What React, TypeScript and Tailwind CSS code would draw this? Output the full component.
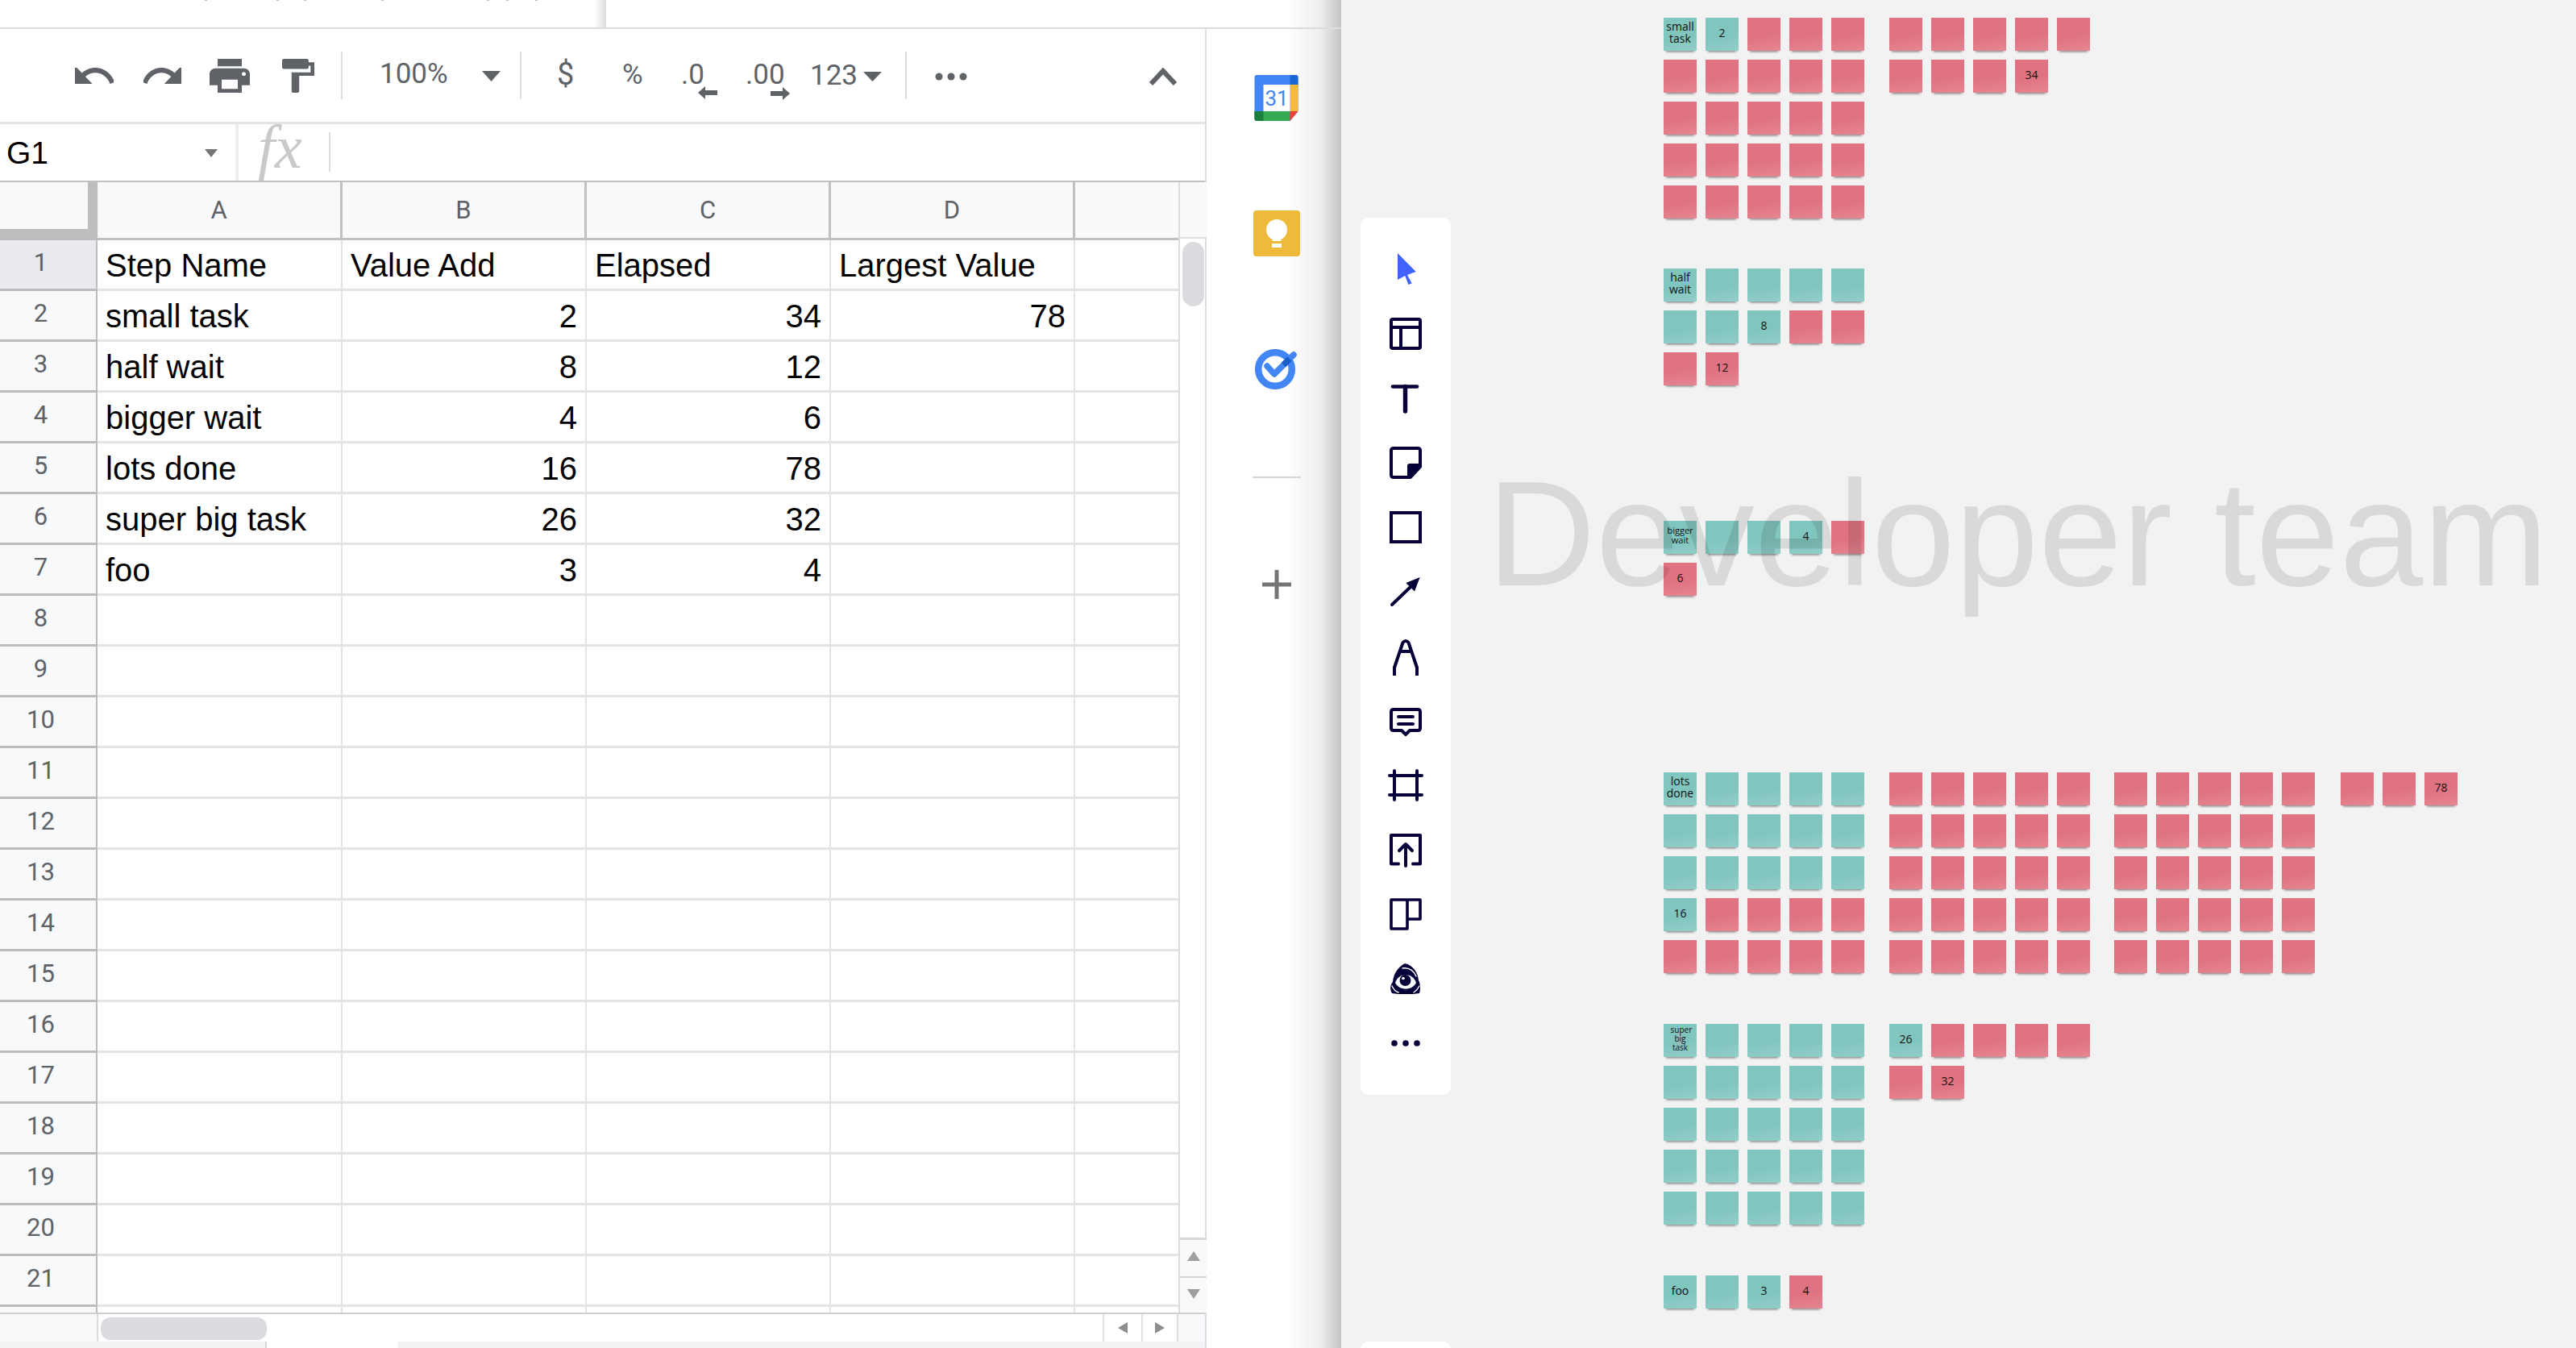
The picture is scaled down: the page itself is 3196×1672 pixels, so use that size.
import React from "react";

const gridCols = ["A", "B", "C", "D"];

// rows of the sheet: [step, value add, elapsed, largest]
const sheetRows: string[][] = [
  ["Step Name", "Value Add", "Elapsed", "Largest Value"],
  ["small task", "2", "34", "78"],
  ["half wait", "8", "12", ""],
  ["bigger wait", "4", "6", ""],
  ["lots done", "16", "78", ""],
  ["super big task", "26", "32", ""],
  ["foo", "3", "4", ""],
];

type Note = { c: "t" | "p"; text?: string; small?: string };

function notes(teal: number, total: number, labels: Record<number, string>, small?: string): Note[] {
  return Array.from({ length: total }, (_, i) => ({
    c: i < teal ? "t" : "p",
    text: labels[i],
    small: i === 0 ? small : undefined,
  }));
}

const blocks: { pos: string; items: Note[] }[] = [
  { pos: "left-[400px] top-[22px]", items: notes(2, 25, { 0: "small task", 1: "2" }) },
  { pos: "left-[680px] top-[22px]", items: notes(0, 9, { 8: "34" }) },
  { pos: "left-[400px] top-[333px]", items: notes(8, 12, { 0: "half wait", 7: "8", 11: "12" }) },
  { pos: "left-[400px] top-[646px]", items: notes(4, 6, { 0: "bigger wait", 3: "4", 5: "6" }, "text-[11px] leading-[12px]") },
  { pos: "left-[400px] top-[958px]", items: notes(16, 25, { 0: "lots done", 15: "16" }) },
  { pos: "left-[680px] top-[958px]", items: notes(0, 25, {}) },
  { pos: "left-[959px] top-[958px]", items: notes(0, 25, {}) },
  { pos: "left-[1240px] top-[958px]", items: notes(0, 3, { 2: "78" }) },
  { pos: "left-[400px] top-[1270px]", items: notes(25, 25, { 0: "super big task" }, "text-[10px] leading-[11px] w-[24px]") },
  { pos: "left-[680px] top-[1270px]", items: notes(1, 7, { 0: "26", 6: "32" }) },
  { pos: "left-[400px] top-[1582px]", items: notes(3, 4, { 0: "foo", 2: "3", 3: "4" }) },
];

function Sticky({ note }: { note: Note }) {
  const tone =
    note.c === "t"
      ? "bg-[linear-gradient(170deg,#80c5be_55%,#93cdc9)]"
      : "bg-[linear-gradient(170deg,#e07381_55%,#e58693)]";
  return (
    <div
      className={`${tone} w-[41px] h-[41px] pb-[5px] flex items-center justify-center text-center text-[#111] shadow-[0_4px_3px_-3px_rgba(0,0,0,0.55)] font-['Open_Sans',sans-serif]`}
    >
      <span className={note.small ?? "text-[14px] leading-[15px]"}>{note.text}</span>
    </div>
  );
}

function GlyphIcon({ box, w, h, d, cls }: { box: string; w: number; h: number; d: string; cls: string }) {
  return (
    <svg viewBox={box} width={w} height={h} preserveAspectRatio="none" className={`shrink-0 ${cls}`} fill="#5f6368">
      <path d={d} />
    </svg>
  );
}

function Caret({ cls, w, h, fill = "#5f6368" }: { cls: string; w: number; h: number; fill?: string }) {
  return (
    <svg viewBox="0 0 10 10" width={w} height={h} preserveAspectRatio="none" className={`shrink-0 ${cls}`}>
      <path d="M0 0H10L5 10Z" fill={fill} />
    </svg>
  );
}

function ToolSep({ cls }: { cls: string }) {
  return <div className={`w-[2px] h-[59px] bg-[#dadce0] shrink-0 ${cls}`} />;
}

function Toolbar() {
  return (
    <div className="h-[118px] flex items-center border-b-[3px] border-[#e2e3e5] text-[#5f6368] font-['Roboto',sans-serif] text-[35px]">
      <GlyphIcon cls="ml-[93px]" box="2 8 20 8" w={48} h={20} d="M12.5 8c-2.65 0-5.05.99-6.9 2.6L2 7v9h9l-3.62-3.62c1.39-1.16 3.16-1.88 5.12-1.88 3.54 0 6.55 2.31 7.6 5.5l2.37-.78C21.08 11.03 17.15 8 12.5 8z" />
      <GlyphIcon cls="ml-[37px]" box="2 8 20 8" w={47} h={20} d="M18.4 10.6C16.55 8.99 14.15 8 11.5 8c-4.65 0-8.58 3.03-9.96 7.22L3.9 16c1.05-3.19 4.05-5.5 7.6-5.5 1.95 0 3.73.72 5.12 1.88L13 16h9V7l-3.6 3.6z" />
      <GlyphIcon cls="ml-[35px]" box="2 3 20 18" w={50} h={42} d="M19 8H5c-1.66 0-3 1.34-3 3v6h4v4h12v-4h4v-6c0-1.66-1.34-3-3-3zm-3 11H8v-5h8v5zm3-7c-.55 0-1-.45-1-1s.45-1 1-1 1 .45 1 1-.45 1-1 1zm-1-9H6v4h12V3z" />
      <GlyphIcon cls="ml-[40px]" box="4 2 17 20" w={40} h={42} d="M18 4V3c0-.55-.45-1-1-1H5c-.55 0-1 .45-1 1v4c0 .55.45 1 1 1h12c.55 0 1-.45 1-1V6h1v4H9v11c0 .55.45 1 1 1h2c.55 0 1-.45 1-1v-9h8V4h-3z" />
      <ToolSep cls="ml-[33px]" />
      <span className="ml-[46px] w-[86px] pb-[4px] leading-none">100%</span>
      <Caret cls="ml-[41px] mt-[2px]" w={23} h={13} />
      <ToolSep cls="ml-[24px]" />
      <span className="ml-[44px] w-[20px] pb-[4px] leading-none text-[38px]">$</span>
      <span className="ml-[61px] w-[27px] pb-[2px] leading-none">%</span>
      <div className="ml-[46px] w-[45px] relative pb-[2px] leading-none">
        <span>.0</span>
        <svg viewBox="0 0 24 16" width="24" height="16" className="absolute left-[21px] top-[32px]">
          <path d="M0 8L9 0V5H24V11H9V16Z" fill="#5f6368" />
        </svg>
      </div>
      <div className="ml-[35px] w-[55px] relative pb-[2px] leading-none">
        <span>.00</span>
        <svg viewBox="0 0 24 16" width="24" height="16" className="absolute left-[31px] top-[33px]">
          <path d="M24 8L15 0V5H0V11H15V16Z" fill="#5f6368" />
        </svg>
      </div>
      <span className="ml-[25px] w-[59px] pb-[1px] leading-none">123</span>
      <Caret cls="ml-[7px] mt-[2px]" w={23} h={12} />
      <ToolSep cls="ml-[29px]" />
      <svg viewBox="0 0 40 10" width="40" height="10" className="ml-[35px] shrink-0 mt-[3px]">
        <circle cx="5" cy="5" r="4.5" fill="#5f6368" />
        <circle cx="20" cy="5" r="4.5" fill="#5f6368" />
        <circle cx="35" cy="5" r="4.5" fill="#5f6368" />
      </svg>
      <svg viewBox="0 0 36 22" width="36" height="22" className="ml-[225px] shrink-0 mt-[2px]">
        <path d="M3 20L18 4L33 20" fill="none" stroke="#5f6368" strokeWidth="6" />
      </svg>
    </div>
  );
}

function FormulaBar() {
  return (
    <div className="h-[72px] flex items-stretch border-b-[2px] border-[#c0c0c0]">
      <div className="w-[292px] flex items-center justify-between pl-[8px] pr-[22px] font-['Liberation_Sans',sans-serif] text-[39px] text-black">
        <span className="leading-none">G1</span>
        <Caret cls="mt-[2px]" w={16} h={10} fill="#757575" />
      </div>
      <div className="w-[4px] bg-[#eceded]" />
      <div className="w-[112px] flex items-center pl-[24px]">
        <span className="font-['Liberation_Serif',serif] italic text-[76px] leading-none text-[#c9c9c9] pb-[14px]">fx</span>
      </div>
      <div className="w-[2px] h-[49px] mt-[10px] bg-[#dadce0]" />
    </div>
  );
}

function GridHeader() {
  return (
    <div className="h-[72px] flex shrink-0 bg-[#f8f9fa] border-b-[3px] border-[#c0c0c0] text-[#5f6368] text-[31px] font-['Roboto',sans-serif]">
      <div className="w-[121px] h-[72px] shrink-0 border-r-[12px] border-b-[14px] border-[#bdbdbd]" />
      {gridCols.map((c, i) => (
        <div
          key={c}
          className={`${i === 0 ? "w-[304px]" : "w-[303px]"} shrink-0 flex items-center justify-center pt-[2px] border-r-[3px] border-[#c0c0c0]`}
        >
          {c}
        </div>
      ))}
      <div className="flex-1" />
    </div>
  );
}

function GridRow({ n }: { n: number }) {
  const row = sheetRows[n - 1] ?? ["", "", "", ""];
  return (
    <div className="h-[63px] flex shrink-0 border-b-[3px] border-[#e2e3e3] text-[40px] text-black font-['Liberation_Sans',sans-serif]">
      <div
        className={`w-[121px] h-[63px] shrink-0 -mb-[3px] flex items-center justify-center pb-[3px] pr-[18px] border-r-[2px] border-b-[3px] border-[#bdbdbd] text-[31px] text-[#5f6368] font-['Roboto',sans-serif] ${
          n === 1 ? "bg-[#e8eaed]" : "bg-[#f8f9fa]"
        }`}
      >
        {n > 21 ? "" : n}
      </div>
      {row.map((v, i) => (
        <div
          key={i}
          className={`${i === 0 ? "w-[304px]" : "w-[303px]"} shrink-0 flex items-center pt-[1px] border-r-[2px] border-[#e4e4e4] whitespace-nowrap ${
            n > 1 && i > 0 ? "justify-end pr-[10px]" : "pl-[10px]"
          }`}
        >
          {v}
        </div>
      ))}
      <div className="flex-1" />
    </div>
  );
}

function VScroll() {
  return (
    <div className="w-[35px] shrink-0 flex flex-col border-l-[2px] border-[#dcdcdc]">
      <div className="h-[70px] bg-[#f8f9fa] border-b-[2px] border-[#dfdfdf]" />
      <div className="flex-1 pt-[4px] pl-[3px]">
        <div className="w-[27px] h-[80px] rounded-full bg-[#dadce0]" />
      </div>
      <div className="h-[48px] pb-[6px] bg-[#f8f9fa] border-t-[3px] border-[#d6d6d6] flex items-center justify-center">
        <svg viewBox="0 0 10 10" width="16" height="12" preserveAspectRatio="none">
          <path d="M5 0L10 10H0Z" fill="#9e9e9e" />
        </svg>
      </div>
      <div className="h-[45px] pb-[3px] bg-[#f8f9fa] border-t-[2px] border-[#d6d6d6] flex items-center justify-center">
        <Caret cls="" w={16} h={12} fill="#9e9e9e" />
      </div>
    </div>
  );
}

function HScroll() {
  return (
    <div className="h-[36px] shrink-0 flex border-t-[2px] border-[#d0d0d0]">
      <div className="w-[122px] bg-[#f8f9fa] border-r-[2px] border-[#dcdcdc] shrink-0" />
      <div className="flex-1 pl-[3px] pt-[4px]">
        <div className="w-[206px] h-[28px] rounded-[12px] bg-[#dadce0]" />
      </div>
      <div className="w-[48px] flex items-center justify-center border-l-[2px] border-[#e2e2e2]">
        <svg viewBox="0 0 10 10" width="12" height="14" preserveAspectRatio="none">
          <path d="M10 0V10L0 5Z" fill="#8e8e8e" />
        </svg>
      </div>
      <div className="w-[44px] flex items-center justify-center border-l-[2px] border-[#e2e2e2]">
        <svg viewBox="0 0 10 10" width="12" height="14" preserveAspectRatio="none">
          <path d="M0 0V10L10 5Z" fill="#8e8e8e" />
        </svg>
      </div>
      <div className="w-[35px] bg-[#f8f9fa] border-l-[2px] border-[#dcdcdc]" />
    </div>
  );
}

function SidePanel() {
  return (
    <div className="flex-1 flex flex-col items-center pl-[6px] bg-[linear-gradient(90deg,#fff_60%,#ededed_85%,#c4c4c4_100%)]">
      {/* calendar */}
      <svg viewBox="0 0 54 57" width="55" height="57" className="mt-[57px] shrink-0">
        <path d="M3 0H51Q54 0 54 3V45L44 57H3Q0 57 0 54V3Q0 0 3 0Z" fill="#4285f4" />
        <path d="M44 0H51Q54 0 54 3V12H44Z" fill="#1967d2" />
        <path d="M44 12H54V45H44Z" fill="#f4b93e" />
        <path d="M11 45H44V57H3Q0 57 0 54V45Z" fill="#34a853" />
        <path d="M0 45H11V57H3Q0 57 0 54Z" fill="#188038" />
        <path d="M44 45H54L44 57Z" fill="#ea4335" />
        <rect x="11" y="12" width="33" height="33" fill="#fff" />
        <text x="27.5" y="38" textAnchor="middle" fontFamily="Roboto, sans-serif" fontSize="26" fill="#4285f4">31</text>
      </svg>
      {/* keep */}
      <svg viewBox="0 0 58 57" width="58" height="57" className="mt-[111px] shrink-0">
        <rect width="58" height="57" rx="4" fill="#efba3c" />
        <circle cx="29" cy="24" r="13" fill="#fff" />
        <path d="M22 30H36L34 38H24Z" fill="#fff" />
        <rect x="23" y="41" width="12" height="5" fill="#fff" />
      </svg>
      {/* tasks */}
      <svg viewBox="0 0 54 50" width="54" height="50" className="mt-[115px] shrink-0">
        <circle cx="25" cy="25" r="20.8" fill="none" stroke="#4285f4" strokeWidth="8.5" />
        <path d="M15 21L24 31L48 7" fill="none" stroke="#4285f4" strokeWidth="7.5" strokeLinecap="round" strokeLinejoin="round" />
        <path d="M35.5 19.5L43 12" fill="none" stroke="#1a5fc8" strokeWidth="7.5" />
      </svg>
      <div className="w-[60px] h-[2px] bg-[#d5d5d5] mt-[108px] shrink-0" />
      {/* add */}
      <svg viewBox="0 0 36 36" width="36" height="36" className="mt-[114px] shrink-0">
        <path d="M18 0V36M0 18H36" stroke="#757575" strokeWidth="5" />
      </svg>
    </div>
  );
}

const ink = "#050038";

function MiroIcon({ children }: { children: React.ReactNode }) {
  return (
    <div className="h-[80px] flex items-center justify-center">
      <svg viewBox="0 0 40 40" width="40" height="40" className="overflow-visible" fill="none" stroke={ink} strokeWidth="4" strokeLinecap="round" strokeLinejoin="round">
        {children}
      </svg>
    </div>
  );
}

function MiroToolbar() {
  return (
    <div className="absolute left-[24px] top-[270px] w-[112px] py-[24px] rounded-[10px] bg-white">
      <MiroIcon>
        <path d="M10 0L32.7 23L22 27L27.7 37.5L23.3 39L19.3 28L10 33Z" fill="#4262ff" stroke="none" />
      </MiroIcon>
      <MiroIcon>
        <path d="M4 2H36Q38 2 38 4V36Q38 38 36 38H4Q2 38 2 36V4Q2 2 4 2ZM2 12H38M14 12V38" strokeLinecap="butt" />
      </MiroIcon>
      <MiroIcon>
        <path d="M4 5.5H34" strokeWidth="4.6" />
        <path d="M19.5 5.5V36" strokeWidth="5.4" />
      </MiroIcon>
      <MiroIcon>
        <path d="M5 2H35Q38 2 38 5V25L26 38H5Q2 38 2 35V5Q2 2 5 2Z" />
        <path d="M22 38V24Q22 21 25 21H38V25L26 38Z" fill={ink} stroke="none" />
      </MiroIcon>
      <MiroIcon>
        <rect x="2" y="2" width="36" height="36" strokeLinejoin="miter" />
      </MiroIcon>
      <MiroIcon>
        <path d="M3 36L26 14" />
        <path d="M37.7 2L20.3 9L31 19.6Z" fill={ink} stroke="none" />
      </MiroIcon>
      <MiroIcon>
        <path d="M6 44V34L16.5 3Q20 -1 23.5 3L34 34V44M13 14H27" strokeLinecap="butt" />
      </MiroIcon>
      <MiroIcon>
        <path d="M5 6H35Q38 6 38 9V29Q38 32 35 32H25L20 37L15 32H5Q2 32 2 29V9Q2 6 5 6Z" />
        <path d="M11 15H29M11 24H29" />
      </MiroIcon>
      <MiroIcon>
        <path d="M6 2V38M34 2V38M0 8H40M0 32H40" />
      </MiroIcon>
      <MiroIcon>
        <path d="M11 37.5H2V2H38V37.5H29" />
        <path d="M20 40V14M12 21L20 13L28 21" />
      </MiroIcon>
      <MiroIcon>
        <path d="M2 2H38V26H22M22 2V38H2V2" strokeWidth="3.6" />
      </MiroIcon>
      <MiroIcon>
        <g stroke="none">
          <path d="M19 1C29 3 35 12 36 22C38 26 39 32 37 38C31 39 27 39 20 39C13 39 8 39 3 38C0 33 1 27 4 24C5 13 11 5 19 1Z" fill={ink} />
          <path d="M7 25C11 12 29 12 33 25C28 35 12 35 7 25Z" fill="#fff" />
          <circle cx="19.5" cy="22" r="7" fill={ink} />
          <circle cx="17" cy="19.5" r="1.8" fill="#fff" />
        </g>
        <path d="M16 7C24 6 30 10 33 17M3 29C5 33 8 36 11 37M37 29C35 33 33 35 30 37" stroke="#fff" strokeWidth="1.4" />
      </MiroIcon>
      <MiroIcon>
        <g fill={ink} stroke="none">
          <circle cx="6" cy="20" r="3.8" />
          <circle cx="20" cy="20" r="3.8" />
          <circle cx="34" cy="20" r="3.8" />
        </g>
      </MiroIcon>
    </div>
  );
}

export default function App() {
  return (
    <div className="w-[3196px] h-[1672px] flex overflow-hidden bg-white">
      {/* sheets window */}
      <div className="w-[1664px] shrink-0 flex flex-col h-full">
        <div className="h-[36px] flex shrink-0 border-b-[2px] border-[#dadce0]">
          <div className="w-[1497px] flex">
            <div className="w-[752px] relative bg-[linear-gradient(90deg,#fff_98%,#dedede)]">
              <svg viewBox="0 0 752 2" width="752" height="2" className="absolute left-0 top-0">
                <path d="M254 0h3v1h-3zM343 0h3v1h-3zM377 0h3v1h-3zM473 0h3v1h-3zM604 0h3v1h-3zM628 0h3v1h-3zM664 0h3v1h-3z" fill="#bbb" />
              </svg>
            </div>
          </div>
          <div className="flex-1 bg-[linear-gradient(90deg,#fff_60%,#ededed_85%,#c4c4c4_100%)]" />
        </div>
        <div className="flex-1 flex min-h-0">
          <div className="w-[1497px] shrink-0 flex flex-col border-r-[2px] border-[#dadce0]">
            <Toolbar />
            <FormulaBar />
            <div className="flex-1 min-h-0 flex">
              <div className="w-[1462px] shrink-0 overflow-hidden flex flex-col">
                <GridHeader />
                {Array.from({ length: 22 }, (_, i) => (
                  <GridRow key={i} n={i + 1} />
                ))}
              </div>
              <VScroll />
            </div>
            <HScroll />
            <div className="h-[8px] shrink-0 flex bg-[#f1f3f4]">
              <div className="w-[331px] border-r-[2px] border-[#d8d8d8]" />
              <div className="w-[162px] bg-white" />
            </div>
          </div>
          <SidePanel />
        </div>
      </div>

      {/* board */}
      <div className="flex-1 relative overflow-hidden bg-[#f2f2f2]">
        {blocks.map((b, i) => (
          <div key={i} className={`absolute ${b.pos} grid grid-cols-[repeat(5,41px)] auto-rows-[41px] gap-[11px]`}>
            {b.items.map((n, j) => (
              <Sticky key={j} note={n} />
            ))}
          </div>
        ))}
        <div className="absolute left-[181px] top-[554px] whitespace-nowrap text-[186.5px] leading-[215px] text-[rgba(0,0,0,0.1)] font-['Liberation_Sans',sans-serif]">
          Developer team
        </div>
        <MiroToolbar />
        <div className="absolute left-[24px] top-[1664px] w-[112px] h-[20px] rounded-t-[10px] bg-white" />
      </div>
    </div>
  );
}
